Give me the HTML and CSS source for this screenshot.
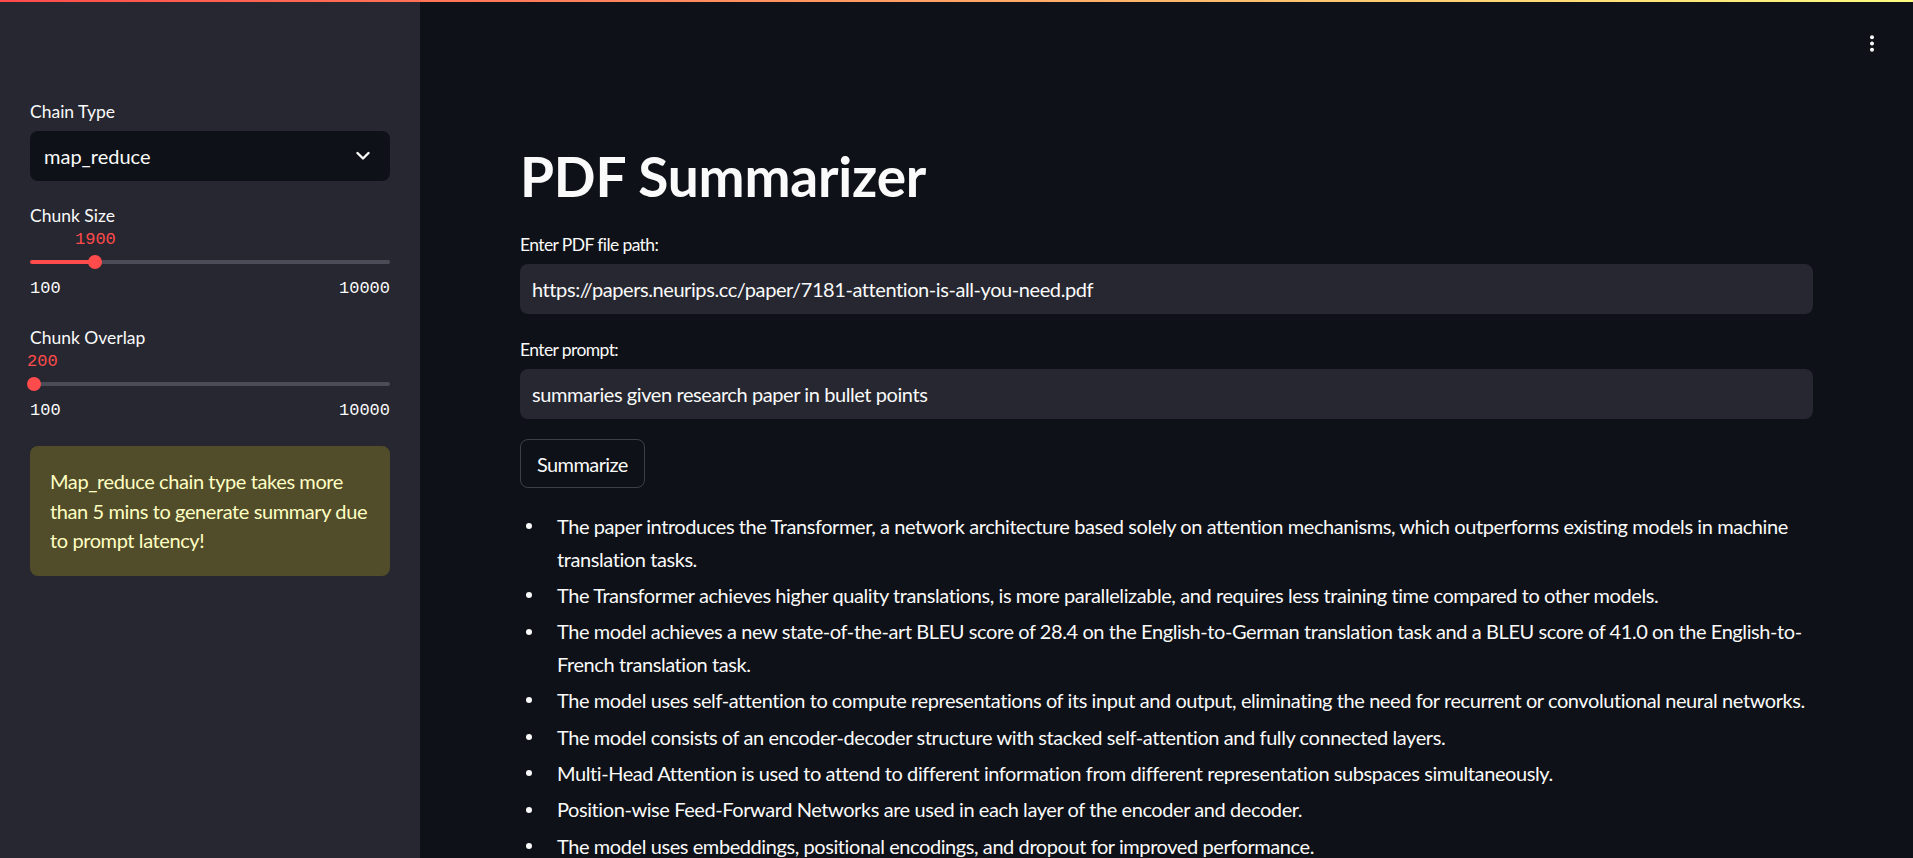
FILE: index.html
```html
<!DOCTYPE html>
<html lang="en">
<head>
<meta charset="utf-8">
<title>PDF Summarizer</title>
<link rel="stylesheet" href="styles.css">
</head>
<body>
<div class="decoration"></div>
<div class="app">
  <aside class="sidebar">
    <div class="widget">
      <div class="label">Chain Type</div>
      <div class="select">
        <span>map_reduce</span>
        <svg class="chevron" width="14" height="10" viewBox="0 0 14 10"><polyline points="1.5,2 7,7.5 12.5,2" fill="none" stroke="#fafafa" stroke-width="2.4" stroke-linecap="round" stroke-linejoin="round"/></svg>
      </div>
    </div>
    <div class="widget slider-widget">
      <div class="label">Chunk Size</div>
      <div class="slider-value" style="margin-left: 45px">1900</div>
      <div class="track-area" style="--pct: 18.18">
        <div class="track"></div>
        <div class="thumb"></div>
      </div>
      <div class="ticks"><span>100</span><span>10000</span></div>
    </div>
    <div class="widget slider-widget">
      <div class="label">Chunk Overlap</div>
      <div class="slider-value" style="margin-left: -3px">200</div>
      <div class="track-area" style="--pct: 1.01">
        <div class="track"></div>
        <div class="thumb"></div>
      </div>
      <div class="ticks"><span>100</span><span>10000</span></div>
    </div>
    <div class="warning">Map_reduce chain type takes more than 5 mins to generate summary due to prompt latency!</div>
  </aside>
  <main class="main">
    <header class="toolbar">
      <svg class="menu" width="6" height="18" viewBox="0 0 6 18"><circle cx="3" cy="2.2" r="2" fill="#fafafa"/><circle cx="3" cy="8.5" r="2" fill="#fafafa"/><circle cx="3" cy="14.8" r="2" fill="#fafafa"/></svg>
    </header>
    <section class="content">
      <h1 class="title">PDF Summarizer</h1>
      <div class="field">
        <div class="field-label">Enter PDF file path:</div>
        <div class="text-input">https://papers.neurips.cc/paper/7181-attention-is-all-you-need.pdf</div>
      </div>
      <div class="field">
        <div class="field-label">Enter prompt:</div>
        <div class="text-input">summaries given research paper in bullet points</div>
      </div>
      <div class="button">Summarize</div>
      <ul class="summary">
        <li>The paper introduces the Transformer, a network architecture based solely on attention mechanisms, which outperforms existing models in machine translation tasks.</li>
        <li>The Transformer achieves higher quality translations, is more parallelizable, and requires less training time compared to other models.</li>
        <li>The model achieves a new state-of-the-art BLEU score of 28.4 on the English-to-German translation task and a BLEU score of 41.0 on the English-to-French translation task.</li>
        <li>The model uses self-attention to compute representations of its input and output, eliminating the need for recurrent or convolutional neural networks.</li>
        <li>The model consists of an encoder-decoder structure with stacked self-attention and fully connected layers.</li>
        <li>Multi-Head Attention is used to attend to different information from different representation subspaces simultaneously.</li>
        <li>Position-wise Feed-Forward Networks are used in each layer of the encoder and decoder.</li>
        <li>The model uses embeddings, positional encodings, and dropout for improved performance.</li>
      </ul>
    </section>
  </main>
</div>
</body>
</html>
```

FILE: styles.css
```css
html, body {
  margin: 0;
  height: 100%;
}
body {
  background: #0e1117;
  color: #fafafa;
  font-family: Lato, "Noto Sans", sans-serif;
  overflow: hidden;
}
.decoration {
  position: fixed;
  top: 0;
  left: 0;
  right: 0;
  height: 2px;
  background: linear-gradient(90deg, #ff4b4b, #fffd80);
  z-index: 10;
}
.app {
  display: flex;
  height: 100vh;
}
.sidebar {
  width: 420px;
  flex: none;
  box-sizing: border-box;
  background: #262730;
  padding: 100px 30px 0;
}
.label {
  font-size: 17.5px;
  line-height: 24px;
  height: 24px;
  margin-bottom: 7px;
}
.select {
  height: 50px;
  background: #0e1117;
  border-radius: 8px;
  display: flex;
  align-items: center;
  justify-content: space-between;
  padding: 0 20px 0 14px;
  font-size: 20px;
}
.chevron {
  display: block;
}
.slider-widget {
  margin-top: 23px;
}
.slider-widget + .slider-widget {
  margin-top: 27px;
}
.slider-widget .label {
  margin-bottom: 0;
}
.slider-value {
  font-family: "Liberation Mono", "DejaVu Sans Mono", monospace;
  font-size: 17px;
  line-height: 24px;
  height: 24px;
  color: #ff4b4b;
}
.track-area {
  position: relative;
  height: 20px;
  display: flex;
  align-items: center;
}
.track {
  width: 100%;
  height: 4px;
  border-radius: 2px;
  background: linear-gradient(to right, #ff4b4b calc(var(--pct) * 1%), #4b4c57 calc(var(--pct) * 1%));
}
.thumb {
  position: absolute;
  top: 3px;
  left: calc(var(--pct) * 1% - 7px);
  width: 14px;
  height: 14px;
  border-radius: 50%;
  background: #ff4b4b;
}
.ticks {
  display: flex;
  justify-content: space-between;
  margin-top: 7px;
  font-family: "Liberation Mono", "DejaVu Sans Mono", monospace;
  font-size: 17px;
  line-height: 20px;
}
.warning {
  margin-top: 25px;
  padding: 21px 14px 20px 20px;
  border-radius: 8px;
  background: rgba(255, 227, 18, 0.2);
  color: #ffffc2;
  font-size: 20px;
  line-height: 29.5px;
  letter-spacing: -0.4px;
}
.main {
  flex: 1;
  min-width: 0;
  display: flex;
  flex-direction: column;
}
.toolbar {
  height: 143px;
  flex: none;
  box-sizing: border-box;
  display: flex;
  justify-content: flex-end;
  align-items: flex-start;
  padding: 35px 38px 0 0;
}
.menu {
  display: block;
}
.content {
  padding: 0 100px;
  letter-spacing: -0.42px;
}
.title {
  margin: 0 0 25px;
  font-size: 55px;
  font-weight: 700;
  line-height: 1.2;
  height: 65px;
  letter-spacing: -0.2px;
}
.field + .field {
  margin-top: 24px;
}
.field-label {
  font-size: 17.5px;
  line-height: 24px;
  height: 24px;
  margin-bottom: 7px;
  letter-spacing: -0.6px;
}
.text-input {
  height: 50px;
  box-sizing: border-box;
  display: flex;
  align-items: center;
  padding: 0 12px;
  background: #262730;
  border-radius: 8px;
  font-size: 20px;
  white-space: nowrap;
}
.button {
  display: inline-flex;
  align-items: center;
  height: 49px;
  box-sizing: border-box;
  margin-top: 20px;
  padding: 0 16px;
  border: 1px solid rgba(250, 250, 250, 0.2);
  border-radius: 8px;
  font-size: 20px;
  letter-spacing: -0.6px;
}
.summary {
  list-style: none;
  margin: 22px -10px 0 0;
  padding: 0;
  font-size: 20px;
  line-height: 32.5px;
}
.summary li {
  display: grid;
  grid-template-columns: 37px 1fr;
}
.summary li + li {
  margin-top: 3.9px;
}
.summary li::before {
  content: "";
  width: 6px;
  height: 6px;
  margin: 13.25px 0 0 6px;
  border-radius: 50%;
  background: #fafafa;
}
```
